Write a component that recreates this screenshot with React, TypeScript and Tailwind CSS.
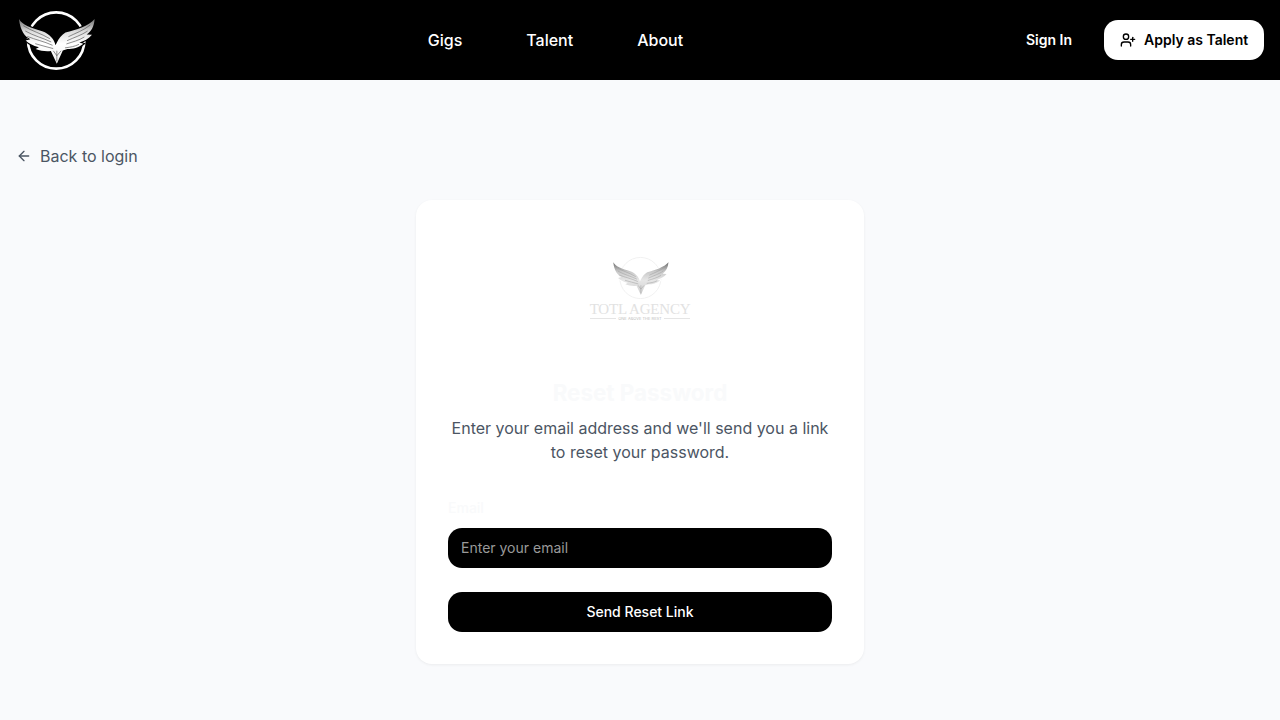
import { ArrowLeft, UserPlus } from 'lucide-react';

// hand drawn eagle, coordinates follow the 360x240 zoom of the logo
function Eagle({ light, className }: { light?: boolean; className: string }) {
  const id = light ? 'wingLight' : 'wingDark';
  const gap = light ? '#ffffff' : '#000000';
  return (
    <svg viewBox="50 25 245 190" className={className} fill="none">
      <defs>
        <linearGradient id={id} x1="0" y1="0" x2="0" y2="1">
          <stop offset="0" stopColor={light ? '#6b6b6b' : '#707070'} />
          <stop offset="0.28" stopColor={light ? '#c8c8c8' : '#dcdcdc'} />
          <stop offset="0.55" stopColor={light ? '#e6e6e6' : '#ffffff'} />
          <stop offset="1" stopColor={light ? '#d0d0d0' : '#f0f0f0'} />
        </linearGradient>
      </defs>
      <circle cx="170" cy="120" r="85" stroke={light ? '#f0f0f0' : '#ffffff'} strokeWidth={light ? 4 : 8} />
      <path
        d="M58 55 C68 74 95 82 128 92 C150 100 164 116 168 134 C174 122 180 110 190 102 L198 96 C230 88 268 76 286 55 C284 78 276 92 262 102 L278 103 C268 116 254 122 240 126 L252 130 C238 142 220 146 204 146 L190 150 L172 190 L154 152 C140 154 124 152 108 146 L118 140 C100 136 86 128 78 120 L92 116 C76 108 62 92 58 55 Z"
        fill={`url(#${id})`}
        stroke={gap}
        strokeWidth="7"
        paintOrder="stroke"
      />
      <g stroke={light ? '#9a9a9a' : '#555555'} strokeWidth="2" strokeLinecap="round">
        <path d="M72 76 C96 92 124 98 150 114" />
        <path d="M78 92 C102 106 130 112 154 124" />
        <path d="M84 108 C108 118 132 122 158 134" />
        <path d="M108 130 C124 136 142 138 160 144" />
        <path d="M272 74 C252 90 228 98 208 108" />
        <path d="M264 92 C246 104 226 110 204 120" />
        <path d="M254 110 C238 120 220 124 202 130" />
        <path d="M238 132 C226 138 214 140 198 142" />
        <path d="M172 152 L172 182" />
        <path d="M162 152 L172 166 L184 152" />
      </g>
    </svg>
  );
}

export default function App() {
  return (
    <div className="min-h-screen bg-[#f9fafc] font-['Inter',sans-serif]">
      {/* Header */}
      <header className="h-20 bg-black flex items-center justify-between px-4">
        <div className="w-[85px] h-20 flex items-center shrink-0">
          <Eagle className="w-[82px] h-[63px] shrink-0" />
        </div>
        <nav className="flex items-center gap-16 text-white font-medium">
          <a href="#">Gigs</a>
          <a href="#">Talent</a>
          <a href="#">About</a>
        </nav>
        <div className="flex items-center gap-4">
          <button className="px-4 h-10 text-white text-sm font-semibold">Sign In</button>
          <button className="w-40 h-10 bg-white text-black rounded-[14px] pl-4 flex items-center gap-2 text-sm font-semibold whitespace-nowrap">
            <UserPlus className="w-4 h-4" />
            Apply as Talent
          </button>
        </div>
      </header>

      <main className="pt-16 px-4">
        <a href="#" className="flex items-center gap-2 text-[#4b5563] h-6">
          <ArrowLeft className="w-4 h-4" />
          Back to login
        </a>

        {/* Card */}
        <div className="w-[448px] mx-auto mt-8 bg-white rounded-2xl shadow-[0_1px_3px_rgba(0,0,0,0.06)] p-8">
          <div className="h-[121px] flex flex-col items-center pt-[23px]">
            <Eagle light className="w-[60px] h-[46px] shrink-0 ml-[2px]" />
            <div className="font-['Liberation_Serif',serif] text-[15px] leading-4 tracking-[-0.2px] text-[#e2e2e2] whitespace-nowrap">
              TOTL AGENCY
            </div>
            <div className="flex items-center gap-[2px] w-[100px] -mt-[1px]">
              <span className="flex-1 h-px bg-[#e5e5e5]" />
              <span className="text-[4px] leading-[5px] text-[#bdbdbd] whitespace-nowrap">ONE ABOVE THE REST</span>
              <span className="flex-1 h-px bg-[#e5e5e5]" />
            </div>
          </div>

          <div className="mt-6 text-center">
            <h1 className="text-[22.4px] leading-8 font-bold text-[#f9fafb]">Reset Password</h1>
            <p className="mt-[7px] text-[#4b5563]">
              Enter your email address and we'll send you a link to reset your password.
            </p>
          </div>

          <form className="mt-[34px]">
            <label className="block text-sm leading-5 font-medium text-[#f9fafb] mb-2.5">Email</label>
            <input
              type="email"
              placeholder="Enter your email"
              className="w-full h-10 bg-black rounded-[14px] pl-[13px] pb-px text-sm text-white placeholder:text-[#9a9a9a] outline-none"
            />
            <button type="button" className="mt-6 w-full h-10 bg-black text-white rounded-[14px] text-sm font-medium">
              Send Reset Link
            </button>
          </form>
        </div>
      </main>
    </div>
  );
}
